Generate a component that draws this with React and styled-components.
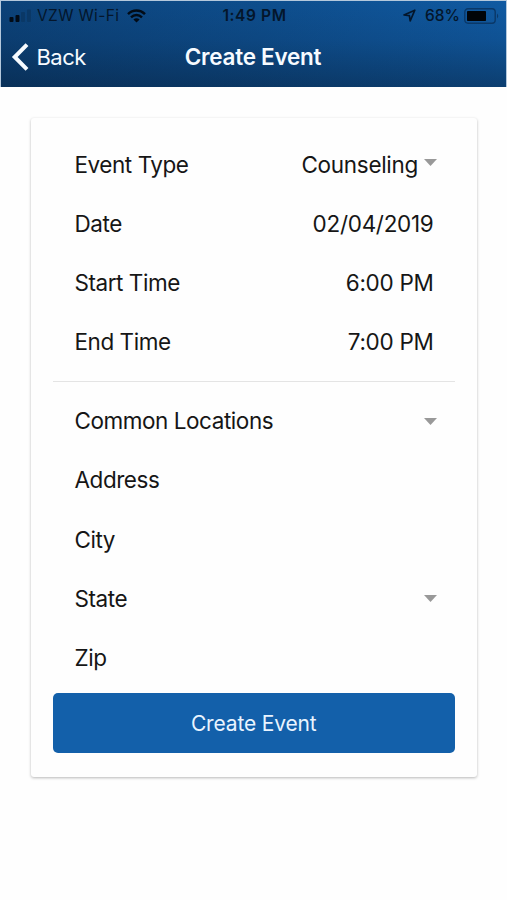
import React from "react";
import styled, { createGlobalStyle } from "styled-components";

const GlobalStyle = createGlobalStyle`
  * {
    box-sizing: border-box;
  }
  body {
    margin: 0;
    background-color: #fefefe;
    font-family: Inter, "Liberation Sans", sans-serif;
  }
`;

const Screen = styled.div`
  width: 507px;
  height: 900px;
  overflow: hidden;
  background-color: #fefefe;
`;

const Header = styled.header`
  height: 87px;
  border: 1px solid #b4c8dc;
  border-bottom: 0;
  color: #f7fbff;
  background:
    linear-gradient(90deg, rgba(4, 20, 42, 0.34) 0%, rgba(4, 20, 42, 0.18) 50%, rgba(4, 20, 42, 0) 100%),
    linear-gradient(180deg, #105aa2 0%, #0f5294 45%, #0c3e70 100%);
`;

const StatusBar = styled.div`
  display: grid;
  grid-template-columns: 1fr auto 1fr;
  align-items: center;
  height: 28px;
  padding: 1px 6px 0 8px;
  color: #04162b;
`;

const StatusGroup = styled.div`
  display: flex;
  align-items: center;
  justify-content: ${(props) => (props.$end ? "flex-end" : "flex-start")};
`;

const StatusText = styled.span`
  font-size: 15.5px;
  line-height: 20px;
  font-weight: ${(props) => props.$weight || 400};
  letter-spacing: ${(props) => props.$spacing || "0"};
  margin: ${(props) => props.$margin || "0"};
`;

const NavBar = styled.nav`
  display: grid;
  grid-template-columns: 1fr auto 1fr;
  align-items: center;
  height: 56px;
  padding: 0 11px 0 10px;
`;

const BackButton = styled.button`
  display: flex;
  align-items: center;
  gap: 7.5px;
  padding: 0;
  border: 0;
  background: none;
  color: inherit;
  font-family: inherit;
  font-size: 22px;
  line-height: 28px;
  letter-spacing: -0.55px;
`;

const Title = styled.h1`
  margin: 0;
  font-size: 22.5px;
  line-height: 28px;
  font-weight: 600;
  letter-spacing: -0.25px;
`;

const Card = styled.main`
  width: 446px;
  height: 659px;
  margin: 31px 0 0 31px;
  padding: 17px 22px 0 21.5px;
  border-radius: 3px;
  background-color: #fefefe;
  box-shadow: 0 1px 3px rgba(0, 0, 0, 0.28);
`;

const Row = styled.div`
  display: flex;
  align-items: center;
  justify-content: space-between;
  height: 59.25px;
  padding: 0 ${(props) => (props.$select ? "18px" : "21.5px")} 0 22px;
  color: #161616;
  font-size: 22.5px;
  line-height: 30px;
  letter-spacing: -0.3px;
  white-space: nowrap;
`;

const Label = styled.span`
  letter-spacing: -0.45px;
`;

const SelectValue = styled.span`
  display: flex;
  align-items: center;
  gap: 6px;
`;

const Divider = styled.hr`
  height: 1px;
  margin: 9px 0 9.6px;
  border: 0;
  background-color: #e4e4e4;
`;

const SubmitButton = styled.button`
  display: block;
  width: 402.5px;
  height: 60.5px;
  margin-top: 5px;
  padding: 0;
  border: 0;
  border-radius: 5px;
  background-color: #1360aa;
  color: #e9f4ff;
  font-family: inherit;
  font-size: 21px;
  letter-spacing: -0.15px;
`;

const CaretIcon = styled.svg`
  display: block;
  width: 13px;
  height: 7px;
  margin-bottom: ${(props) => (props.$raised ? "5px" : "0")};
`;

const Caret = ({ raised }) => (
  <CaretIcon viewBox="0 0 13 7" $raised={raised}>
    <path d="M0 0H13L6.5 7Z" fill="#999" />
  </CaretIcon>
);

const SignalIcon = () => (
  <svg width="23" height="14" viewBox="0 0 23 14">
    <rect x="0.5" y="8" width="4" height="5" rx="1" fill="#020b16" />
    <rect x="6.5" y="6" width="4" height="7" rx="1" fill="#020b16" />
    <rect x="12" y="3" width="4" height="10" rx="1" fill="#0a3866" />
    <rect x="18" y="0.5" width="4" height="12.5" rx="1" fill="#0a3866" />
  </svg>
);

const WifiIcon = () => (
  <svg width="19" height="14" viewBox="0 0 19 14" fill="none" stroke="#020b16">
    <path d="M1 5.1C5.8 0.4 13.2 0.4 18 5.1" strokeWidth="2.5" />
    <path d="M4 8.3C7.2 5.3 11.8 5.3 15 8.3" strokeWidth="2.4" />
    <path d="M6.4 10.4Q9.5 7.9 12.6 10.4L9.5 13.5Z" fill="#020b16" stroke="none" />
  </svg>
);

const LocationIcon = () => (
  <svg width="13" height="13" viewBox="0 0 13 13">
    <path
      d="M11.8 1.2L1 6L6.4 6.6L7.2 12Z"
      fill="none"
      stroke="#04162b"
      strokeWidth="1.7"
      strokeLinejoin="round"
    />
  </svg>
);

const BatteryIcon = () => (
  <svg width="36" height="16" viewBox="0 0 36 16">
    <rect x="0.8" y="0.8" width="30.4" height="14.4" rx="3.2" fill="none" stroke="#0a3868" strokeWidth="1.4" />
    <rect x="3" y="3" width="19" height="10" rx="0.8" fill="#010408" />
    <path d="M33 5.5Q35.5 8 33 10.5Z" fill="#0a3868" />
  </svg>
);

const BackIcon = () => (
  <svg width="18" height="28" viewBox="0 0 18 28">
    <path d="M16 1.6L3.7 14L16 26.4" fill="none" stroke="currentColor" strokeWidth="4" />
  </svg>
);

const eventFields = [
  { label: "Event Type", value: "Counseling", select: true },
  { label: "Date", value: "02/04/2019" },
  { label: "Start Time", value: "6:00 PM" },
  { label: "End Time", value: "7:00 PM" },
];

const locationFields = [
  { label: "Common Locations", select: true },
  { label: "Address" },
  { label: "City" },
  { label: "State", select: true },
  { label: "Zip" },
];

const Field = ({ label, value, select }) => (
  <Row $select={select}>
    <Label>{label}</Label>
    <SelectValue>
      {value && <span>{value}</span>}
      {select && <Caret raised={Boolean(value)} />}
    </SelectValue>
  </Row>
);

export default function App() {
  return (
    <Screen>
      <GlobalStyle />
      <Header>
        <StatusBar>
          <StatusGroup>
            <SignalIcon />
            <StatusText $margin="0 8px 0 5px" $spacing="0.35px">VZW Wi-Fi</StatusText>
            <WifiIcon />
          </StatusGroup>
          <StatusText $weight={600} $spacing="0.6px">1:49 PM</StatusText>
          <StatusGroup $end>
            <LocationIcon />
            <StatusText $weight={500} $margin="0 4px 0 9px">68%</StatusText>
            <BatteryIcon />
          </StatusGroup>
        </StatusBar>
        <NavBar>
          <BackButton>
            <BackIcon />
            Back
          </BackButton>
          <Title>Create Event</Title>
        </NavBar>
      </Header>
      <Card>
        {eventFields.map((field) => (
          <Field key={field.label} {...field} />
        ))}
        <Divider />
        {locationFields.map((field) => (
          <Field key={field.label} {...field} />
        ))}
        <SubmitButton>Create Event</SubmitButton>
      </Card>
    </Screen>
  );
}
